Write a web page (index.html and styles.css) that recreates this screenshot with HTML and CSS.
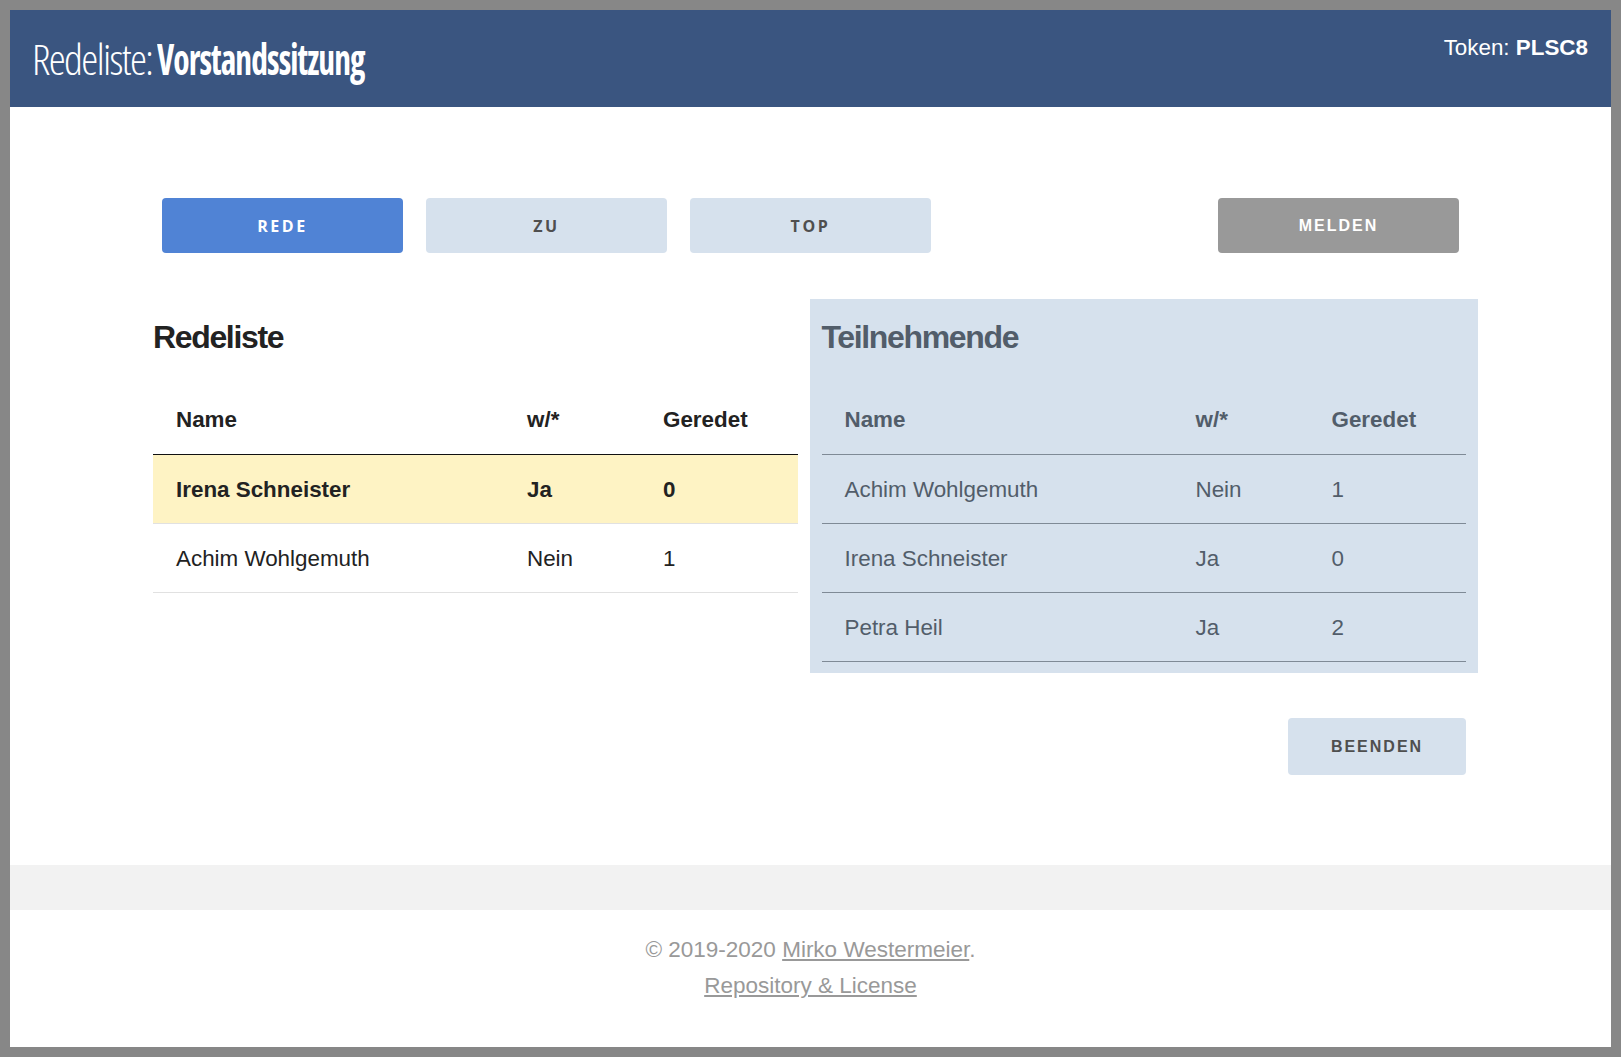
FILE: index.html
```html
<!DOCTYPE html>
<html lang="de">
<head>
<meta charset="utf-8">
<title>Redeliste: Vorstandssitzung</title>
<link rel="stylesheet" href="styles.css">
</head>
<body>
<div class="page">
  <header class="topbar">
    <h1 class="title"><span class="title-light">Redeliste:</span> <span class="title-bold">Vorstandssitzung</span></h1>
    <div class="token">Token: <strong>PLSC8</strong></div>
  </header>

  <main class="main">
    <div class="actions">
      <button class="btn btn-primary">Rede</button>
      <button class="btn btn-light">Zu</button>
      <button class="btn btn-light">Top</button>
      <span class="spacer"></span>
      <button class="btn btn-gray">Melden</button>
    </div>

    <div class="cols">
      <section class="col">
        <h2 class="heading">Redeliste</h2>
        <table class="list">
          <thead>
            <tr><th class="c-name">Name</th><th class="c-w">w/*</th><th>Geredet</th></tr>
          </thead>
          <tbody>
            <tr class="current"><td>Irena Schneister</td><td>Ja</td><td>0</td></tr>
            <tr><td>Achim Wohlgemuth</td><td>Nein</td><td>1</td></tr>
          </tbody>
        </table>
      </section>
      <section class="col panel">
        <h2 class="heading">Teilnehmende</h2>
        <table class="list list-panel">
          <thead>
            <tr><th class="c-name">Name</th><th class="c-w">w/*</th><th>Geredet</th></tr>
          </thead>
          <tbody>
            <tr><td>Achim Wohlgemuth</td><td>Nein</td><td>1</td></tr>
            <tr><td>Irena Schneister</td><td>Ja</td><td>0</td></tr>
            <tr><td>Petra Heil</td><td>Ja</td><td>2</td></tr>
          </tbody>
        </table>
      </section>
      <div class="col-end"></div>
      <div class="col-end end-right">
        <button class="btn btn-light btn-end">Beenden</button>
      </div>
    </div>
  </main>

  <div class="band"></div>

  <footer class="footer">
    <p>© 2019-2020 <a href="#">Mirko Westermeier</a>.</p>
    <p><a href="#">Repository &amp; License</a></p>
  </footer>
</div>
</body>
</html>
```

FILE: styles.css
```css
html, body {
  margin: 0;
  padding: 0;
}
body {
  background: #878787;
  padding: 10px;
  font-family: "Liberation Sans", Arial, sans-serif;
  color: #222;
}
.page {
  background: #fff;
  min-height: 1037px;
  display: flex;
  flex-direction: column;
}

/* header */
.topbar {
  height: 97px;
  background: #3a5580;
  display: flex;
  justify-content: space-between;
  align-items: flex-start;
  padding: 0 23px 0 22px;
  color: #fff;
}
.title {
  margin: 0;
  align-self: center;
  font-family: "Open Sans", sans-serif;
  font-stretch: 75%;
  font-size: 43px;
  line-height: 50px;
  white-space: nowrap;
  word-spacing: -3px;
}
.title-light {
  font-weight: 300;
  letter-spacing: -1.6px;
}
.title-bold {
  display: inline-block;
  font-weight: 700;
  letter-spacing: -1.2px;
  transform: scaleX(0.78);
  transform-origin: left center;
}
.token {
  padding-top: 26px;
  font-size: 22.4px;
  line-height: 24px;
}

/* main */
.main {
  padding-top: 91px;
}
.actions {
  display: grid;
  grid-template-columns: repeat(5, 241px);
  column-gap: 23px;
  justify-content: center;
}
.btn {
  height: 55px;
  border: none;
  border-radius: 4px;
  font-family: "Liberation Sans", Arial, sans-serif;
  font-weight: 700;
  font-size: 16px;
  letter-spacing: 2px;
  text-transform: uppercase;
  padding: 0;
  cursor: pointer;
}
.btn-primary {
  background: #5083d5;
  color: #fff;
  font-family: "Open Sans", sans-serif;
  letter-spacing: 2.6px;
}
.btn-light {
  background: #d6e1ed;
  color: #4f4f4f;
}
.actions .btn-light {
  font-family: "Open Sans", sans-serif;
  letter-spacing: 2.6px;
}
.btn-gray {
  background: #999;
  color: #fff;
}

.cols {
  width: 1337px;
  margin: 46px 0 0 calc(50% - 669.5px);
  display: grid;
  grid-template-columns: 1fr 1fr;
}
.col {
  padding: 18px 12px 11px;
}
.panel {
  background: #d6e1ed;
  color: #525d6a;
}
.heading {
  margin: 0 0 28px;
  font-size: 32px;
  line-height: 40px;
  font-weight: 700;
  letter-spacing: -1.35px;
}

.list {
  width: 100%;
  border-collapse: collapse;
  font-size: 22.4px;
  line-height: 25px;
}
.list th, .list td {
  text-align: left;
  padding: 22px 23px 21px;
  border-bottom: 1px solid #e1e1e1;
}
.list th {
  padding-bottom: 22px;
  border-bottom: 1px solid #111;
  font-weight: 700;
}
.c-name { width: 305px; }
.c-w { width: 90px; }
.list .current td {
  background: #fef3c4;
  font-weight: 700;
}
.list-panel th, .list-panel td {
  border-bottom: 1px solid #7f8a96;
}

.end-right {
  display: flex;
  justify-content: flex-end;
  padding: 45px 12px 0;
}
.btn-end {
  width: 178px;
  height: 57px;
}

.band {
  margin-top: 90px;
  height: 45px;
  background: #f2f2f2;
}

.footer {
  padding: 22px 0 40px;
  text-align: center;
  color: #999;
  font-size: 22.5px;
  line-height: 36px;
}
.footer p { margin: 0; }
.footer a { color: #999; text-decoration: underline; }
```
